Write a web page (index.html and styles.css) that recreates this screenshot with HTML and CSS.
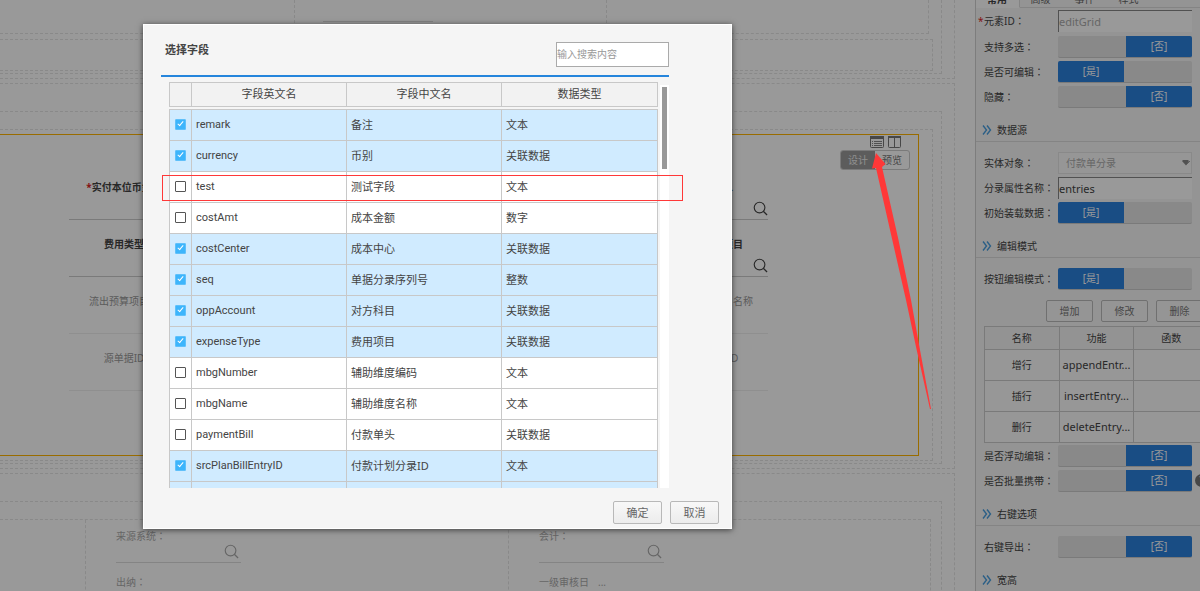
FILE: index.html
```html
<!DOCTYPE html>
<html lang="zh-CN">
<head>
<meta charset="utf-8">
<title>选择字段</title>
<link rel="stylesheet" href="styles.css">
</head>
<body>
<svg class="defs" width="0" height="0" aria-hidden="true">
  <symbol id="search" viewBox="0 0 16 16"><circle cx="7" cy="7" r="5.7" fill="none" stroke="currentColor" stroke-width="1.2"/><path d="M11 11l4 4" stroke="currentColor" stroke-width="1.4"/></symbol>
  <symbol id="more" viewBox="0 0 10 10"><path d="M1 .5L4.500 5 1 9.500M5 .5L8.500 5 5 9.500" fill="none" stroke="#4a9fe0" stroke-width="1.4"/></symbol>
</svg>
<div class="page">
  <main class="canvas">
    <section class="panel panel-top">
      <div class="panel-in">
        <div class="columns columns-top">
          <div class="col"></div>
          <div class="col"><div class="stub-line"></div></div>
          <div class="col"></div>
        </div>
        <div class="strip"></div>
      </div>
    </section>
    <section class="panel panel-mid">
      <div class="panel-in">
        <div class="panel-core">
          <div class="selected">
            <div class="form">
              <div class="field"><span class="name"><i>*</i>实付本位币金额</span><span class="line"></span></div>
              <div class="field"><span class="name">款人</span><span class="line"><svg><use href="#search"/></svg></span></div>
              <div class="field"><span class="name">费用类型</span><span class="line"></span></div>
              <div class="field"><span class="name">预算项目</span><span class="line"><svg><use href="#search"/></svg></span></div>
              <div class="field off"><span class="name">流出预算项目名</span><span class="line"></span></div>
              <div class="field off"><span class="name">预算项目名称</span><span class="line"></span></div>
              <div class="field off"><span class="name">源单据ID</span><span class="line"></span></div>
              <div class="field off"><span class="name">源单ID</span><span class="line"></span></div>
            </div>
            <div class="tools">
              <div class="tool-icons">
                <svg width="14" height="12" viewBox="0 0 14 12"><rect x=".5" y=".5" width="13" height="11" rx="1" fill="none" stroke="#777"/><path d="M0 1.500h14" stroke="#777" stroke-width="3"/><path d="M2 5.500h1M4 5.500h8M2 7.500h1M4 7.500h8M2 9.500h1M4 9.500h8" stroke="#888"/></svg>
                <svg width="13" height="12" viewBox="0 0 13 12"><rect x=".5" y=".5" width="12" height="11" rx="1" fill="none" stroke="#777"/><path d="M0 1h13" stroke="#777" stroke-width="2"/><path d="M6.500 1v11" stroke="#777"/></svg>
              </div>
              <div class="modes"><button class="on" type="button">设计</button><button type="button">预览</button></div>
            </div>
          </div>
        </div>
      </div>
    </section>
    <section class="panel panel-low">
      <div class="panel-in">
        <div class="columns columns-low">
          <div class="col"></div>
          <div class="col">
            <div class="item"><span>来源系统<b>：</b></span><span class="line"><svg><use href="#search"/></svg></span></div>
            <div class="item"><span>出纳<b>：</b></span></div>
          </div>
          <div class="col">
            <div class="item"><span>会计<b>：</b></span><span class="line"><svg><use href="#search"/></svg></span></div>
            <div class="item"><span>一级审核日<em>...</em></span></div>
          </div>
        </div>
      </div>
    </section>
  </main>

  <aside class="side">
    <nav class="tabs"><button class="on" type="button">常用</button><button type="button">高级</button><button type="button">事件</button><button type="button">样式</button></nav>
    <div class="row"><i>*</i><label for="eid">元素ID<b>：</b></label><input id="eid" class="text" type="text" placeholder="editGrid"></div>
    <div class="row"><label for="s1">支持多选<b>：</b></label><button id="s1" class="switch" type="button" role="switch" aria-checked="false"><span>[否]</span></button></div>
    <div class="row"><label for="s2">是否可编辑<b>：</b></label><button id="s2" class="switch" type="button" role="switch" aria-checked="true"><span>[是]</span></button></div>
    <div class="row"><label for="s3">隐藏<b>：</b></label><button id="s3" class="switch" type="button" role="switch" aria-checked="false"><span>[否]</span></button></div>
    <h2><svg><use href="#more"/></svg>数据源</h2>
    <div class="row"><label for="ent">实体对象<b>：</b></label><div class="pick"><select id="ent" disabled><option>付款单分录</option></select><svg width="8" height="6" viewBox="0 0 8 6"><path d="M0 1l1-1h5l1 1-3 4.500z" fill="#888"/><path d="M4 5l4-4" stroke="#999"/></svg></div></div>
    <div class="row"><label for="att">分录属性名称<b>：</b></label><input id="att" class="text" type="text" value="entries"></div>
    <div class="row"><label for="s4">初始装载数据<b>：</b></label><button id="s4" class="switch" type="button" role="switch" aria-checked="true"><span>[是]</span></button></div>
    <h2><svg><use href="#more"/></svg>编辑模式</h2>
    <div class="row"><label for="s5">按钮编辑模式<b>：</b></label><button id="s5" class="switch" type="button" role="switch" aria-checked="true"><span>[是]</span></button></div>
    <div class="actions"><button type="button">增加</button><button type="button">修改</button><button type="button">删除</button></div>
    <table class="ops">
      <tr><th>名称</th><th>功能</th><th>函数</th></tr>
      <tr><td>增行</td><td>appendEntr...</td><td></td></tr>
      <tr><td>插行</td><td>insertEntry...</td><td></td></tr>
      <tr><td>删行</td><td>deleteEntry...</td><td></td></tr>
    </table>
    <div class="row"><label for="s6">是否浮动编辑<b>：</b></label><button id="s6" class="switch" type="button" role="switch" aria-checked="false"><span>[否]</span></button></div>
    <div class="row"><label for="s7">是否批量携带<b>：</b></label><button id="s7" class="switch" type="button" role="switch" aria-checked="false"><span>[否]</span></button><span class="help">?</span></div>
    <h2><svg><use href="#more"/></svg>右键选项</h2>
    <div class="row"><label for="s8">右键导出<b>：</b></label><button id="s8" class="switch" type="button" role="switch" aria-checked="false"><span>[否]</span></button></div>
    <h2><svg><use href="#more"/></svg>宽高</h2>
  </aside>
</div>

<div class="mask"></div>

<div class="dialog" role="dialog" aria-labelledby="dlg">
  <header><h1 id="dlg">选择字段</h1><input type="text" aria-label="搜索" placeholder="输入搜索内容"></header>
  <div class="list">
    <div class="tables">
      <table class="grid head">
        <colgroup><col class="c0"><col class="c1"><col class="c1"><col></colgroup>
        <tr><th></th><th>字段英文名</th><th>字段中文名</th><th>数据类型</th></tr>
      </table>
      <div class="view">
        <table class="grid">
          <colgroup><col class="c0"><col class="c1"><col class="c1"><col></colgroup>
          <tr class="sel"><td><input type="checkbox" aria-label="remark" checked></td><td>remark</td><td>备注</td><td>文本</td></tr>
          <tr class="sel"><td><input type="checkbox" aria-label="currency" checked></td><td>currency</td><td>币别</td><td>关联数据</td></tr>
          <tr><td><input type="checkbox" aria-label="test"></td><td>test</td><td>测试字段</td><td>文本</td></tr>
          <tr><td><input type="checkbox" aria-label="costAmt"></td><td>costAmt</td><td>成本金额</td><td>数字</td></tr>
          <tr class="sel"><td><input type="checkbox" aria-label="costCenter" checked></td><td>costCenter</td><td>成本中心</td><td>关联数据</td></tr>
          <tr class="sel"><td><input type="checkbox" aria-label="seq" checked></td><td>seq</td><td>单据分录序列号</td><td>整数</td></tr>
          <tr class="sel"><td><input type="checkbox" aria-label="oppAccount" checked></td><td>oppAccount</td><td>对方科目</td><td>关联数据</td></tr>
          <tr class="sel"><td><input type="checkbox" aria-label="expenseType" checked></td><td>expenseType</td><td>费用项目</td><td>关联数据</td></tr>
          <tr><td><input type="checkbox" aria-label="mbgNumber"></td><td>mbgNumber</td><td>辅助维度编码</td><td>文本</td></tr>
          <tr><td><input type="checkbox" aria-label="mbgName"></td><td>mbgName</td><td>辅助维度名称</td><td>文本</td></tr>
          <tr><td><input type="checkbox" aria-label="paymentBill"></td><td>paymentBill</td><td>付款单头</td><td>关联数据</td></tr>
          <tr class="sel"><td><input type="checkbox" aria-label="srcPlanBillEntryID" checked></td><td>srcPlanBillEntryID</td><td>付款计划分录ID</td><td>文本</td></tr>
          <tr class="sel"><td></td><td></td><td></td><td></td></tr>
        </table>
      </div>
    </div>
    <div class="bar"><div class="thumb"></div></div>
  </div>
  <footer><button type="button">确定</button><button type="button">取消</button></footer>
</div>

<div class="mark"></div>
<svg class="arrow" width="62" height="258" viewBox="0 0 62 258"><path d="M6 0L2 15.500l4-.5L22.300 87 36 147 46.700 197 60 256h1L50 197 41 147 28.500 87 12 14l3.500-3z" fill="#ff3838"/></svg>
</body>
</html>
```

FILE: styles.css
```css
* { box-sizing: border-box; }

body {
  margin: 0;
  height: 100vh;
  overflow: hidden;
  position: relative;
  background: #fff;
  color: #444;
  font: 10px/14px "Noto Sans", "Noto Sans CJK SC", sans-serif;
}

button, input, select { font: inherit; color: inherit; margin: 0; padding: 0; }
i, em { font-style: normal; }
b { font-family: "Noto Sans CJK TC", sans-serif; font-weight: 400; font-feature-settings: "locl" 0; }
i { color: #d22; }
svg { display: block; }
.defs { position: absolute; }

.page { display: flex; height: 100%; overflow: hidden; }

/* design canvas */
.canvas {
  flex: 1;
  min-width: 0;
  overflow: hidden;
  padding-right: 20px;
  display: flex;
  flex-direction: column;
  gap: 4px;
}
.panel, .panel-in, .panel-core, .strip, .columns { border: 1px dashed #e4e4e4; border-left: 0; flex: none; }
.panel { padding-right: 12px; }
.panel-in { padding-right: 8px; }
.panel-top { border-top: 0; padding-bottom: 4px; }
.panel-top .panel-in { border-top: 0; padding-bottom: 2px; }
.panel-mid { padding-top: 27px; padding-bottom: 4px; }
.panel-mid .panel-in { padding-top: 17px; padding-bottom: 2px; }
.panel-core { padding: 4px 13px 4px 0; }
.panel-low { padding-top: 27px; }
.panel-low, .panel-low .panel-in, .columns-low { border-bottom: 0; }
.panel-low .panel-in { padding: 17px 10px 0 0; }
.strip { height: 32px; }
.columns { display: grid; }
.col { border-right: 1px dashed #e4e4e4; }
.col:last-child { border-right: 0; }
.columns-top { grid-template-columns: 295px 312px 1fr; height: 34px; border-top: 0; margin: 0 4px 5px 0; }
.columns-top .col { padding: 21px 28px 0; }
.stub-line { width: 110px; border-bottom: 1px solid #ddd; }
.columns-low { grid-template-columns: 86px 423px 1fr; }
.columns-low .col { min-height: 90px; padding: 9px 29px 0 30px; display: flex; flex-direction: column; gap: 12px; color: #aaa; }
.item { width: 125px; }
.item > span:first-child { display: block; }
.item em { margin-left: 9px; }
.item .line { height: 20px; padding: 1px 2px; }
.item .line svg { color: #aaa; }

.line { display: flex; justify-content: flex-end; border-bottom: 1px solid #ccc; }
.line svg { width: 15px; height: 15px; color: #444; }
.item .line { border-color: #ddd; }

.selected { position: relative; border: 1px solid #ffb400; border-left: 0; padding: 28px 150px 64px 69px; }
.form { display: grid; grid-template-columns: 110px 90px; justify-content: space-between; }
.field { height: 57px; display: flex; flex-direction: column; justify-content: flex-end; text-align: center; font-weight: 700; }
.field .name { white-space: nowrap; }
.field .line { height: 26px; padding-top: 7px; }
.off { color: #999; font-weight: 400; }
.off .line { border-color: #eee; }

.tools { position: absolute; top: 1px; right: 8px; }
.tool-icons { display: flex; justify-content: flex-end; gap: 4px; padding-right: 9px; }
.modes { display: flex; margin-top: 2px; border: 1px solid #ccc; border-radius: 3px; }
.modes button { width: 34px; height: 18px; border: 0; background: none; color: #777; }
.modes .on { background: #999; color: #eee; border-radius: 2px 0 0 2px; }

/* property sidebar */
.side { flex: none; width: 225px; overflow: hidden; border-left: 1px solid #d0d0d0; padding-left: 8px; background: #f7f7f7; }
.tabs { display: flex; height: 18px; margin: -10px 0 0 -8px; }
.tabs button { width: 44px; flex: none; padding-right: 3px; border: 0; border-bottom: 1px solid #ddd; background: none; color: #666; }
.tabs button:last-child { width: 92px; padding-right: 51px; }
.tabs .on { padding-right: 1px; background: #fff; font-weight: 700; border-right: 1px solid #ddd; border-bottom-color: #fff; color: #444; }
.row { display: flex; align-items: center; height: 25px; position: relative; }
.tabs + .row { height: 26px; }
.row label { flex: none; width: 74px; white-space: nowrap; }
.row > i { position: absolute; left: -6px; }
.text { width: 134px; height: 22px; border: 0 solid #888; border-width: 1px 0 0 1px; background: #fff; font-size: 11px; }
.text::placeholder { color: #aaa; opacity: 1; }
.pick { position: relative; width: 134px; }
.pick select { display: block; width: 100%; height: 22px; appearance: none; border: 1px solid #e4e4e4; background: #fafafa; color: #aaa; opacity: 1; padding-left: 7px; }
.pick svg { position: absolute; right: 2px; top: 8px; }
.switch { flex: none; display: flex; justify-content: flex-end; width: 134px; height: 22px; border: 0; border-bottom: 1px solid #ccc; border-radius: 2px; background: #e4e4e4; overflow: hidden; }
.switch[aria-checked="true"] { justify-content: flex-start; }
.switch span { width: 66px; height: 21px; line-height: 21px; background: #2b80dc; color: #fff; }
.help { flex: none; width: 13px; height: 13px; margin-left: 3px; border-radius: 50%; background: #777; color: #fff; text-align: center; line-height: 13px; }
.side h2 { display: flex; align-items: center; gap: 4px; height: 33px; margin: 0 0 8px -8px; padding: 9px 0 0 6px; border-bottom: 1px solid #ddd; font-size: 10px; font-weight: 400; }
.side h2 svg { width: 10px; height: 10px; margin-right: 1px; }
.actions { display: flex; gap: 8px; margin: 9px 0 4px 62px; }
.actions button { flex: none; width: 47px; height: 22px; border: 1px solid #bbb; border-radius: 2px; background: #f9f9f9; color: #777; }
.ops { width: 225px; table-layout: fixed; border-collapse: collapse; background: #fcfcfc; text-align: center; }
.ops th, .ops td { height: 31px; padding: 0; border: 1px solid #ccc; font-weight: 400; }
.ops th { height: 23px; background: #f6f6f6; }
.ops td:nth-child(2) { font-size: 11px; }

.mask { position: absolute; inset: 0; background: rgba(0, 0, 0, .4); }

/* field picker dialog */
.dialog {
  position: absolute;
  left: 143px;
  top: 24px;
  width: 589px;
  padding: 0 12px 4px 17px;
  border: 1px solid #fff;
  background: #f5f5f5;
  box-shadow: 0 1px 6px rgba(0, 0, 0, .6);
  font-size: 11px;
}
.dialog header { display: flex; justify-content: space-between; align-items: center; height: 52px; margin-right: 50px; padding: 8px 0 0 4px; border-bottom: 2px solid #2585dc; }
.dialog h1 { margin: 0; padding-bottom: 8px; font-size: 11px; line-height: 14px; }
.dialog header input { width: 113px; height: 25px; border: 1px solid #aaa; background: #fff; font-size: 10px; }
.dialog header input::placeholder { color: #999; opacity: 1; }
.list { display: flex; gap: 2px; margin: 5px 50px 0 8px; }
.tables { flex: 1; min-width: 0; }
.grid { width: 100%; table-layout: fixed; border-collapse: collapse; background: #fff; }
.grid th, .grid td { height: 31px; padding: 0 4px 1px; border: 1px solid #c8c8c8; }
.grid th { height: 24px; font-weight: 400; background: #f2f2f2; padding: 0 0 1px; }
.grid td:nth-child(2) { padding-bottom: 0; font-family: Roboto, "Noto Sans", sans-serif; }
.c0 { width: 22px; }
.c1 { width: 155px; }
.grid .sel td { background: #d0ebff; }
.view { height: 379px; margin-top: 2px; overflow: hidden; }
.grid input { appearance: none; display: block; position: relative; width: 11px; height: 11px; margin: 0 0 0 1px; border: 1px solid #555; border-radius: 1px; background: #fff; }
.grid input:checked { border-color: #5fc0fa; background: #3db5fc; }
.grid input:checked::before { content: ""; position: absolute; left: 3px; top: 0; width: 3px; height: 6px; box-sizing: content-box; width: 2px; height: 5px; border: solid #fff; border-width: 0 1px 1px 0; transform: rotate(40deg); }
.bar { width: 9px; margin-top: 3px; padding: 2px; background: #fff; }
.thumb { height: 82px; background: #999; }
.dialog footer { display: flex; justify-content: flex-end; gap: 8px; margin-top: 13px; }
.dialog footer button { width: 49px; height: 23px; border: 1px solid #b8b8b8; border-radius: 2px; background: linear-gradient(#f8f8f8, #ececec); color: #666; }

/* callouts */
.mark { position: absolute; left: 162px; top: 175px; width: 521px; height: 26px; border: 1px solid #ff3838; }
.arrow { position: absolute; left: 870px; top: 153px; width: 62px; height: 258px; }
```
